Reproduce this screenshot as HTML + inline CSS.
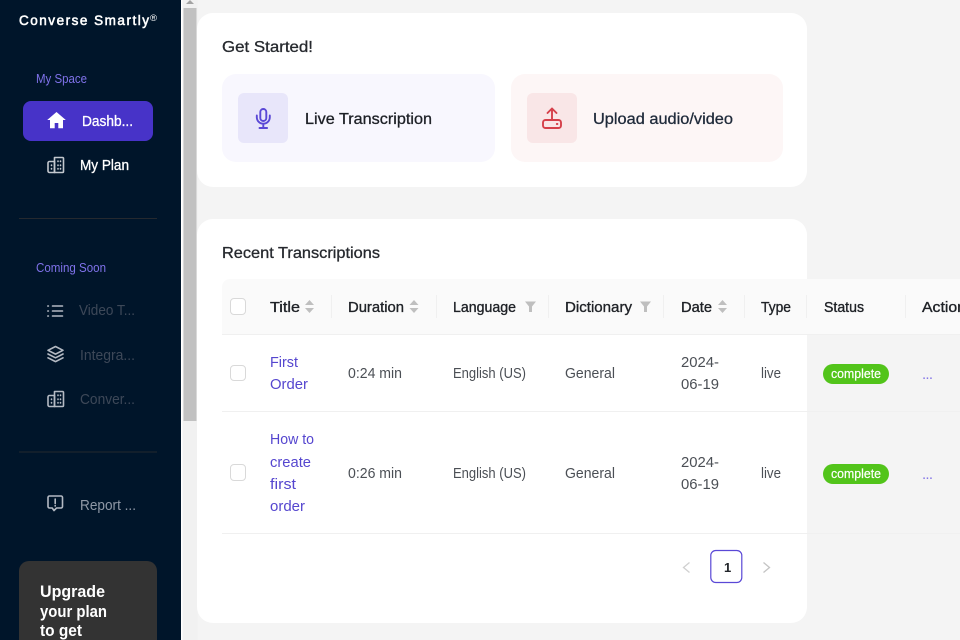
<!DOCTYPE html>
<html lang="en">
<head>
<meta charset="utf-8">
<title>Converse Smartly</title>
<style>
html,body{margin:0;padding:0;width:960px;height:640px;overflow:hidden;background:#f4f4f4}
svg{display:block;position:absolute;left:0;top:0}
text{font-family:"Liberation Sans",sans-serif;font-size:14px}
.m{stroke:currentColor;stroke-width:.3px}
.hd{font-size:14.5px;fill:#1f2227;color:#1f2227;stroke:currentColor;stroke-width:.35px}
.td{font-size:14.5px;fill:#4b4f55}
.lk{font-size:14.5px;fill:#5546cf}
.ic{fill:none;stroke:#b4bac3;stroke-width:1.6;stroke-linecap:round;stroke-linejoin:round}
.ck{fill:#fff;stroke:#d9d9d9;stroke-width:1}
.dv{stroke:#f0f0f0;stroke-width:1}
.srt{fill:#bfbfbf}
.sec{font-size:13px;fill:#7f72ea}
.dim{font-size:14.5px;fill:#3d4858}
</style>
</head>
<body>
<svg width="960" height="640" viewBox="0 0 960 640" xmlns="http://www.w3.org/2000/svg">
<rect width="960" height="640" fill="#f4f4f4"/>

<!-- sidebar -->
<rect x="0" y="0" width="182" height="640" fill="#00152a"/>
<rect x="181" y="0" width="1.5" height="640" fill="#fff"/>
<rect x="182.500" y="0" width="15" height="640" fill="#f1f1f1"/>
<rect x="183.500" y="8" width="13" height="413" fill="#c1c1c1"/>
<path d="M190 0l4 4h-8z" fill="#a3a3a3"/>

<text x="19" y="25" fill="#fff" color="#fff" style="font-size:13.5px;stroke:currentColor;stroke-width:.55px" textLength="130" lengthAdjust="spacing">Converse Smartly</text>
<text x="150" y="21" fill="#fff" style="font-size:9px" textLength="7" lengthAdjust="spacingAndGlyphs">®</text>

<text x="36" y="83" class="sec" textLength="51" lengthAdjust="spacingAndGlyphs">My Space</text>
<rect x="23" y="101" width="130" height="40" rx="8" fill="#4733c8"/>
<path d="M56.500 112l-9.300 8h2.800v8.300h4.700v-5.300h3.600v5.300h4.700v-8.300h2.800z" fill="#fff"/>
<text x="82" y="126" fill="#fff" color="#fff" class="m" style="font-size:14.5px" textLength="51" lengthAdjust="spacingAndGlyphs">Dashb...</text>

<g class="ic" style="stroke:#c2c7ce">
<path d="M54.500 157.500h8a1 1 0 0 1 1 1v13a1 1 0 0 1-1 1h-8z"/>
<path d="M54.500 161.500h-5a1.500 1.500 0 0 0-1.500 1.500v8a1.500 1.500 0 0 0 1.500 1.500h5z"/>
<path d="M51.500 165v.5M51.500 168.500v.5M58 161v.5M60.500 161v.5M58 165v.5M60.500 165v.5M58 168.500v.5M60.500 168.500v.5"/>
</g>
<text x="80" y="170" fill="#fff" color="#fff" class="m" style="font-size:14.5px" textLength="49" lengthAdjust="spacingAndGlyphs">My Plan</text>

<rect x="19" y="218" width="138" height="1" fill="#25292f"/>

<text x="36" y="272" class="sec" textLength="70" lengthAdjust="spacingAndGlyphs">Coming Soon</text>

<g class="ic">
<path d="M52.500 306h10M52.500 311h10M52.500 316h10"/>
<path d="M47.800 306h.6M47.800 311h.6M47.800 316h.6"/>
</g>
<text x="79" y="315" class="dim" textLength="56" lengthAdjust="spacingAndGlyphs">Video T...</text>

<g class="ic">
<path d="M55.500 346.500l7.500 3.800-7.500 3.800-7.500-3.800z"/>
<path d="M48 354l7.500 3.800 7.500-3.800"/>
<path d="M48 357.800l7.500 3.800 7.500-3.800"/>
</g>
<text x="80" y="360" class="dim" textLength="55" lengthAdjust="spacingAndGlyphs">Integra...</text>

<g class="ic">
<path d="M54.500 391.500h8a1 1 0 0 1 1 1v13a1 1 0 0 1-1 1h-8z"/>
<path d="M54.500 395.500h-5a1.500 1.500 0 0 0-1.500 1.500v8a1.500 1.500 0 0 0 1.500 1.500h5z"/>
<path d="M51.500 399v.5M51.500 402.500v.5M58 395v.5M60.500 395v.5M58 399v.5M60.500 399v.5M58 402.500v.5M60.500 402.500v.5"/>
</g>
<text x="80" y="404" class="dim" textLength="55" lengthAdjust="spacingAndGlyphs">Conver...</text>

<rect x="19" y="451.500" width="138" height="1" fill="#25292f"/>

<g class="ic">
<path d="M49.500 496h11.500a1.500 1.500 0 0 1 1.500 1.500v9a1.500 1.500 0 0 1-1.500 1.500h-4.500l-2.500 2.500-1.800-2.500h-2.700a1.500 1.500 0 0 1-1.500-1.500v-9a1.500 1.500 0 0 1 1.500-1.500z"/>
<path d="M55.200 499v4.500M55.200 505.600v.4"/>
</g>
<text x="80" y="510" fill="#8f98a6" style="font-size:14.5px" textLength="56" lengthAdjust="spacingAndGlyphs">Report ...</text>

<rect x="19" y="561" width="138" height="100" rx="10" fill="#333333"/>
<g fill="#fff" color="#fff">
<text x="40" y="597" font-weight="700" style="font-size:16.5px" textLength="65" lengthAdjust="spacingAndGlyphs">Upgrade</text>
<text x="40" y="617" font-weight="700" style="font-size:16.5px" textLength="67" lengthAdjust="spacingAndGlyphs">your plan</text>
<text x="40" y="636" font-weight="700" style="font-size:16.5px" textLength="42" lengthAdjust="spacingAndGlyphs">to get</text>
</g>

<!-- card 1 -->
<rect x="197" y="13" width="610" height="174" rx="16" fill="#fff"/>
<text x="222" y="52" fill="#26292e" color="#26292e" class="m" style="font-size:16px" textLength="91" lengthAdjust="spacingAndGlyphs">Get Started!</text>

<rect x="222" y="74" width="273" height="88" rx="14" fill="#f8f7fe"/>
<rect x="238" y="93" width="50" height="50" rx="6" fill="#e8e6fa"/>
<g fill="none" stroke="#5a48d6" stroke-width="1.900" stroke-linecap="round">
<rect x="260.300" y="109" width="6" height="12" rx="3"/>
<path d="M256.800 115.500v1.700a6.500 6.500 0 0 0 13 0v-1.700M263.300 123.700v4M259.500 128h7.600"/>
</g>
<text x="305" y="124" fill="#1d2026" color="#1d2026" class="m" style="font-size:16px" textLength="127" lengthAdjust="spacingAndGlyphs">Live Transcription</text>

<rect x="511" y="74" width="272" height="88" rx="14" fill="#fdf6f6"/>
<rect x="527" y="93" width="50" height="50" rx="6" fill="#f9e6e7"/>
<g fill="none" stroke="#d5404a" stroke-width="1.900" stroke-linecap="round" stroke-linejoin="round">
<path d="M552 120v-11.500M547.500 113l4.500-4.500 4.500 4.500"/>
<rect x="543" y="120" width="18" height="8" rx="2.500"/>
<path d="M556.800 124h.6"/>
</g>
<text x="593" y="124" fill="#1f2a3a" color="#1f2a3a" class="m" style="font-size:16px" textLength="140" lengthAdjust="spacingAndGlyphs">Upload audio/video</text>

<!-- card 2 -->
<rect x="197" y="219" width="610" height="404" rx="16" fill="#fff"/>
<text x="222" y="258" fill="#26292e" color="#26292e" class="m" style="font-size:16px" textLength="158" lengthAdjust="spacingAndGlyphs">Recent Transcriptions</text>

<!-- table header -->
<path d="M222 287a8 8 0 0 1 8-8h730v55h-738z" fill="#fafafa"/>
<rect x="222" y="334" width="738" height="1" fill="#f0f0f0"/>
<rect x="222" y="411" width="738" height="1" fill="#f0f0f0"/>
<rect x="222" y="533" width="738" height="1" fill="#f0f0f0"/>

<rect x="230.500" y="298.500" width="15" height="16" rx="3.500" class="ck"/>
<rect x="230.500" y="365.500" width="15" height="15" rx="3.500" class="ck"/>
<rect x="230.500" y="464.500" width="15" height="16" rx="3.500" class="ck"/>

<g class="dv">
<path d="M331.500 295v23M436.500 295v23M548.500 295v23M663.500 295v23M744.500 295v23M806.500 295v23M905.500 295v23"/>
</g>

<text x="270" y="312" class="hd" textLength="30" lengthAdjust="spacingAndGlyphs">Title</text>
<path class="srt" d="M309.500 300l4.500 5h-9zM309.500 313l4.500-5h-9z"/>
<text x="348" y="312" class="hd" textLength="56" lengthAdjust="spacingAndGlyphs">Duration</text>
<path class="srt" d="M414 300l4.500 5h-9zM414 313l4.500-5h-9z"/>
<text x="453" y="312" class="hd" textLength="63" lengthAdjust="spacingAndGlyphs">Language</text>
<path class="srt" d="M525 301.500h11l-4 5v5.500h-3v-5.500z"/>
<text x="565" y="312" class="hd" textLength="67" lengthAdjust="spacingAndGlyphs">Dictionary</text>
<path class="srt" d="M640 301.500h11l-4 5v5.500h-3v-5.500z"/>
<text x="681" y="312" class="hd" textLength="31" lengthAdjust="spacingAndGlyphs">Date</text>
<path class="srt" d="M722.500 300l4.500 5h-9zM722.500 313l4.500-5h-9z"/>
<text x="761" y="312" class="hd" textLength="30" lengthAdjust="spacingAndGlyphs">Type</text>
<text x="824" y="312" class="hd" textLength="40" lengthAdjust="spacingAndGlyphs">Status</text>
<text x="922" y="312" class="hd" textLength="44" lengthAdjust="spacingAndGlyphs">Action</text>

<!-- row 1 -->
<text x="270" y="367" class="lk" textLength="28" lengthAdjust="spacingAndGlyphs">First</text>
<text x="270" y="389" class="lk" textLength="38" lengthAdjust="spacingAndGlyphs">Order</text>
<text x="348" y="378" class="td" textLength="54" lengthAdjust="spacingAndGlyphs">0:24 min</text>
<text x="453" y="378" class="td" textLength="73" lengthAdjust="spacingAndGlyphs">English (US)</text>
<text x="565" y="378" class="td" textLength="50" lengthAdjust="spacingAndGlyphs">General</text>
<text x="681" y="367" class="td" textLength="38" lengthAdjust="spacingAndGlyphs">2024-</text>
<text x="681" y="389" class="td" textLength="38" lengthAdjust="spacingAndGlyphs">06-19</text>
<text x="761" y="378" class="td" textLength="20" lengthAdjust="spacingAndGlyphs">live</text>
<rect x="823" y="364" width="66" height="20" rx="10" fill="#52c41a"/>
<text x="831" y="378" fill="#fff" color="#fff" style="font-size:13px;stroke:currentColor;stroke-width:.2px" textLength="50" lengthAdjust="spacingAndGlyphs">complete</text>
<text x="922" y="379" fill="#8577e6" style="font-size:15px" textLength="11" lengthAdjust="spacing">...</text>

<!-- row 2 -->
<text x="270" y="444" class="lk" textLength="44" lengthAdjust="spacingAndGlyphs">How to</text>
<text x="270" y="467" class="lk" textLength="41" lengthAdjust="spacingAndGlyphs">create</text>
<text x="270" y="489" class="lk" textLength="26" lengthAdjust="spacingAndGlyphs">first</text>
<text x="270" y="511" class="lk" textLength="35" lengthAdjust="spacingAndGlyphs">order</text>
<text x="348" y="478" class="td" textLength="54" lengthAdjust="spacingAndGlyphs">0:26 min</text>
<text x="453" y="478" class="td" textLength="73" lengthAdjust="spacingAndGlyphs">English (US)</text>
<text x="565" y="478" class="td" textLength="50" lengthAdjust="spacingAndGlyphs">General</text>
<text x="681" y="467" class="td" textLength="38" lengthAdjust="spacingAndGlyphs">2024-</text>
<text x="681" y="489" class="td" textLength="38" lengthAdjust="spacingAndGlyphs">06-19</text>
<text x="761" y="478" class="td" textLength="20" lengthAdjust="spacingAndGlyphs">live</text>
<rect x="823" y="464" width="66" height="20" rx="10" fill="#52c41a"/>
<text x="831" y="478" fill="#fff" color="#fff" style="font-size:13px;stroke:currentColor;stroke-width:.2px" textLength="50" lengthAdjust="spacingAndGlyphs">complete</text>
<text x="922" y="479" fill="#8577e6" style="font-size:15px" textLength="11" lengthAdjust="spacing">...</text>

<!-- pagination -->
<path d="M689.500 562.500l-6 5 6 5" fill="none" stroke="#d0d0d0" stroke-width="1.300"/>
<rect x="710.800" y="550.500" width="31" height="32" rx="5" fill="#fff" stroke="#5a48d6" stroke-width="1.200"/>
<text x="724" y="572" font-weight="700" fill="#23262b" style="font-size:13px">1</text>
<path d="M763.500 562.500l6 5-6 5" fill="none" stroke="#c4c4c4" stroke-width="1.300"/>
</svg>
</body>
</html>
